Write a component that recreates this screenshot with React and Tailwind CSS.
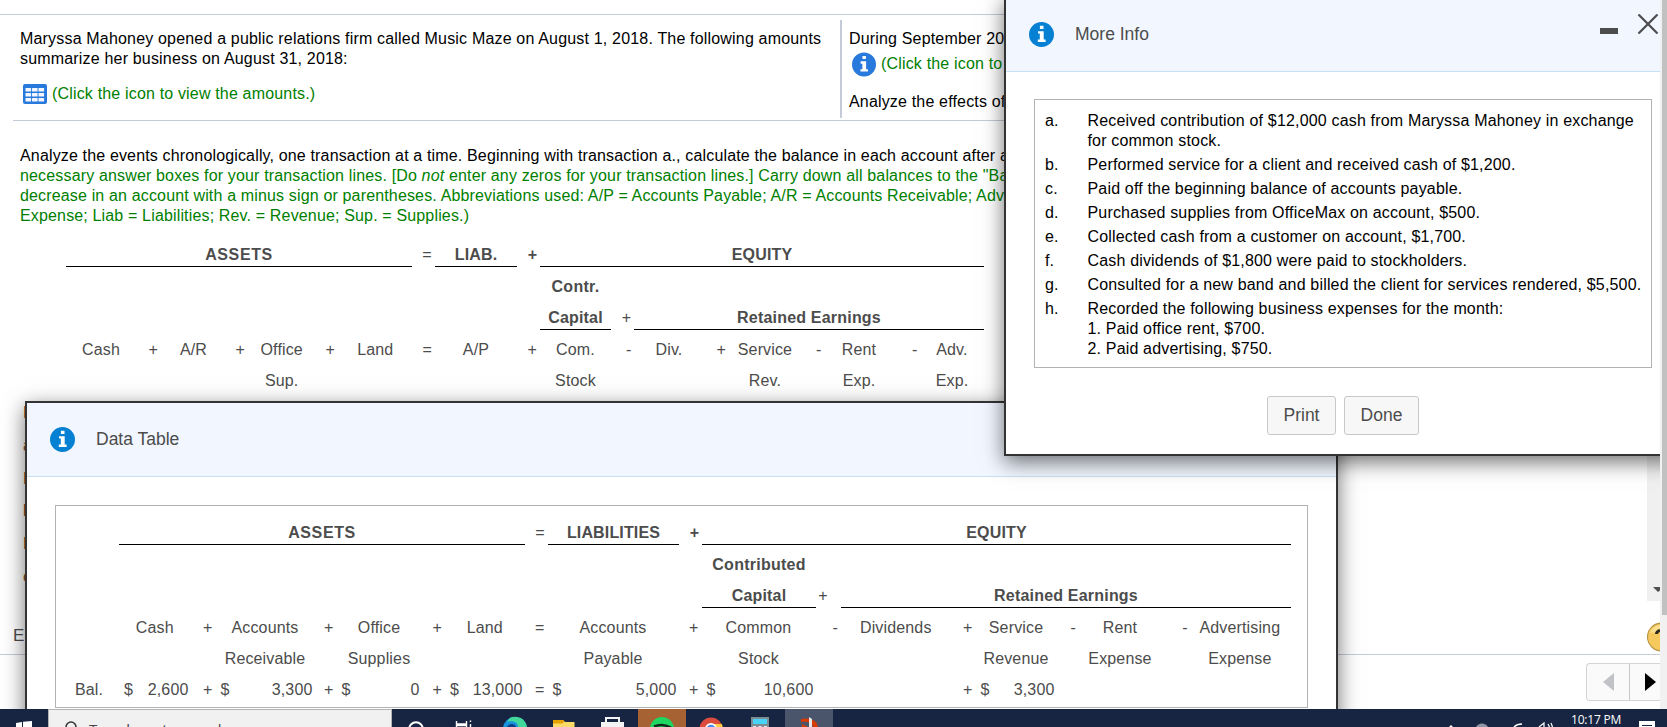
import React from 'react';
import { clsx } from 'clsx';

// Column widths of the two balance tables (label, operator, label, ...)
const WORKSHEET_COLS = [70, 22, 71, 16, 73.4, 16.6, 80.6, 16.4, 88, 17, 77, 17.5, 75, 19.5, 78, 17.5, 75, 21, 69];
const DATA_COLS = [71.5, 22, 105, 16, 91, 17.5, 85.5, 17, 137, 17, 120, 19.5, 115.5, 19, 87, 16.5, 88, 23.7, 104.3];

const OPERATORS = ['+', '+', '+', '=', '+', '-', '+', '-', '-'];

const EVENTS = [
    { id: 'a.', lines: ['Received contribution of $12,000 cash from Maryssa Mahoney in exchange', 'for common stock.'] },
    { id: 'b.', lines: ['Performed service for a client and received cash of $1,200.'] },
    { id: 'c.', lines: ['Paid off the beginning balance of accounts payable.'] },
    { id: 'd.', lines: ['Purchased supplies from OfficeMax on account, $500.'] },
    { id: 'e.', lines: ['Collected cash from a customer on account, $1,700.'] },
    { id: 'f.', lines: ['Cash dividends of $1,800 were paid to stockholders.'] },
    { id: 'g.', lines: ['Consulted for a new band and billed the client for services rendered, $5,500.'] },
    { id: 'h.', lines: ['Recorded the following business expenses for the month:', '1. Paid office rent, $700.', '2. Paid advertising, $750.'] },
];

const BALANCES = ['2,600', '3,300', '0', '13,000', '5,000', '10,600', '', '3,300', '', ''];

const InfoIcon = ({ className }) => (
    <svg viewBox="0 0 25 25" className={clsx('shrink-0', className)}>
        <circle cx="12.5" cy="12.5" r="12.5" fill="currentColor" />
        <path d="M10.9 3.7h3.6v3.2h-3.6zM9 9.2h5.7v8.3h1.9v2.4H8.8v-2.4h2v-5.9H9z" fill="#fff" />
    </svg>
);

const TableIcon = () => (
    <svg viewBox="0 0 24 20" className="w-6 h-5 shrink-0">
        <rect width="24" height="20" rx="2" fill="#2879dc" />
        {[4, 9, 14].map((y) =>
            [2.5, 9, 15.5].map((x) => <rect key={`${x}-${y}`} x={x} y={y} width="5.6" height="3.6" rx="0.6" fill="#f4f8fe" />)
        )}
    </svg>
);

/* Row of column labels, operators are only drawn on the first one */
const LabelRow = ({ cols, labels, operators = true, className }) => (
    <div className={clsx('flex h-[31px] leading-[31px] whitespace-nowrap', className)}>
        {cols.map((width, i) => (
            <div
                key={i}
                style={{ width }}
                className={clsx('shrink-0 flex', i % 2 ? 'justify-end' : 'justify-center')}
            >
                {i % 2 ? operators && OPERATORS[(i - 1) / 2] : labels[i / 2]}
            </div>
        ))}
    </div>
);

const Worksheet = () => (
    <div className="pl-[66px] mt-[12px] tracking-[0.15px] text-[#4c4c4c] font-normal">
        <div className="flex h-[29px] leading-[34px] text-center font-bold">
            <div className="w-[346px] border-b border-black tracking-[0.6px]">ASSETS</div>
            <div className="w-[23px] pl-[7px] font-normal">=</div>
            <div className="w-[82px] border-b border-black">LIAB.</div>
            <div className="w-[23px] pl-[8px]">+</div>
            <div className="w-[444px] border-b border-black tracking-[0.15px]">EQUITY</div>
        </div>
        <div className="h-[32px] leading-[40px] ml-[474px] w-[71px] text-center font-bold tracking-[0.3px]">Contr.</div>
        <div className="flex h-[31px] leading-[38px] ml-[474px] text-center font-bold tracking-[0.2px]">
            <div className="w-[71px] border-b border-black">Capital</div>
            <div className="w-[23px] pl-[8px] font-normal">+</div>
            <div className="w-[350px] border-b border-black">Retained Earnings</div>
        </div>
        <LabelRow
            cols={WORKSHEET_COLS}
            className="mt-[4px]"
            labels={['Cash', 'A/R', 'Office', 'Land', 'A/P', 'Com.', 'Div.', 'Service', 'Rent', 'Adv.']}
        />
        <LabelRow
            cols={WORKSHEET_COLS}
            operators={false}
            labels={['', '', 'Sup.', '', '', 'Stock', '', 'Rev.', 'Exp.', 'Exp.']}
        />
    </div>
);

const DataTable = () => (
    <div className="w-[1253px] h-[203px] ml-[28px] mt-[28px] border border-[#b3b3b3] tracking-[0.15px] text-[#4c4c4c]">
        <div className="flex h-[39px] pt-[10px] ml-[63px] leading-[34px] text-center font-bold">
            <div className="w-[406px] border-b border-black tracking-[0.6px]">ASSETS</div>
            <div className="w-[23px] pl-[7px] font-normal">=</div>
            <div className="w-[131px] border-b border-black tracking-[0.15px]">LIABILITIES</div>
            <div className="w-[23px] pl-[8px]">+</div>
            <div className="w-[589px] border-b border-black tracking-[0.15px]">EQUITY</div>
        </div>
        <div className="h-[32px] leading-[40px] ml-[646px] w-[114px] text-center font-bold tracking-[0.25px]">Contributed</div>
        <div className="flex h-[31px] leading-[38px] ml-[646px] text-center font-bold tracking-[0.2px]">
            <div className="w-[114px] border-b border-black">Capital</div>
            <div className="w-[25px] pr-[11px] font-normal">+</div>
            <div className="w-[450px] border-b border-black">Retained Earnings</div>
        </div>
        <LabelRow
            cols={DATA_COLS}
            className="mt-[4px] ml-[63px]"
            labels={['Cash', 'Accounts', 'Office', 'Land', 'Accounts', 'Common', 'Dividends', 'Service', 'Rent', 'Advertising']}
        />
        <LabelRow
            cols={DATA_COLS}
            operators={false}
            className="ml-[63px]"
            labels={['', 'Receivable', 'Supplies', '', 'Payable', 'Stock', '', 'Revenue', 'Expense', 'Expense']}
        />
        <div className="flex h-[31px] leading-[31px]">
            <div className="w-[63px] pl-[19px]">Bal.</div>
            {DATA_COLS.map((width, i) => {
                const value = BALANCES[i / 2];
                if (i % 2) {
                    const shown = BALANCES[(i + 1) / 2];
                    return <div key={i} style={{ width }} className="shrink-0 text-right">{shown && OPERATORS[(i - 1) / 2]}</div>;
                }
                return (
                    <div
                        key={i}
                        style={{ width }}
                        className={clsx('shrink-0 flex justify-between', i === 0 ? 'pl-[5px] pr-[2px]' : 'pl-[8px] pr-[5px]')}
                    >
                        {value && <span>$</span>}
                        <span>{value}</span>
                    </div>
                );
            })}
        </div>
    </div>
);

const DialogHeader = ({ title, children }) => (
    <div className="flex items-center h-[74px] bg-[#f1f6ff] border-b border-[#c5e2f5] pl-[23px] text-[#4c4c4c]">
        <InfoIcon className="w-[25px] h-[25px] text-[#0580d2]" />
        <h2 className="w-[90px] ml-[21px] mb-[2px] text-[17.5px] leading-5 whitespace-nowrap">{title}</h2>
        {children}
    </div>
);

const DataTableDialog = () => (
    <div className="absolute left-[25px] top-[401px] w-[1313px] h-[420px] bg-white border-2 border-[#333] shadow-[0_6px_20px_rgba(0,0,0,0.56)]">
        <DialogHeader title="Data Table" />
        <DataTable />
    </div>
);

const MoreInfoDialog = () => (
    <div className="absolute left-[1004px] -top-[4px] w-[720px] h-[460px] bg-white border-2 border-[#333] shadow-[0_6px_20px_rgba(0,0,0,0.56)]">
        <DialogHeader title="More Info">
            <div className="ml-[435px] mt-[-21px] flex items-start">
                <div className="w-[18px] h-[6px] mt-[14px] bg-[#4c4c4c]" />
                <svg viewBox="0 0 22 20" className="w-[22px] h-5 ml-[19px]" fill="none" stroke="#4c4c4c" strokeWidth="2.2">
                    <path d="M1.5 0.5L20.5 19.5M20.5 0.5L1.5 19.5" />
                </svg>
            </div>
        </DialogHeader>
        <div className="w-[618px] h-[269px] ml-[28px] mt-[27px] pt-[11px] pl-[10px] border border-[#b3b3b3] text-black">
            {EVENTS.map((event) => (
                <div key={event.id} className="flex leading-5 mb-1 whitespace-nowrap tracking-[0.17px]">
                    <div className="w-[42.5px]">{event.id}</div>
                    <div>
                        {event.lines.map((line) => <p key={line}>{line}</p>)}
                    </div>
                </div>
            ))}
        </div>
        <div className="flex gap-2 mt-[28px] ml-[261px] text-[17.5px] text-[#4c4c4c]">
            <button className="w-[69px] h-[39px] rounded-[3px] border border-[#c8c8c8] bg-[#f7f7f7]">Print</button>
            <button className="w-[75px] h-[39px] rounded-[3px] border border-[#c8c8c8] bg-[#f7f7f7]">Done</button>
        </div>
    </div>
);

const Problem = () => (
    <>
        <div className="h-[15px] border-b border-[#c5cad9]" />
        <div className="flex ml-[13px] h-[106px] border-b border-[#c5cad9] whitespace-nowrap leading-5">
            <div className="w-[827px] pl-[7px] pt-[14px]">
                <p className="tracking-[0.18px]">Maryssa Mahoney opened a public relations firm called Music Maze on August 1, 2018. The following amounts</p>
                <p className="tracking-[0.18px]">summarize her business on August 31, 2018:</p>
                <div className="flex items-center gap-[5px] mt-[15px] pl-[3px] text-[#008000] tracking-[0.17px]">
                    <TableIcon />
                    <span>(Click the icon to view the amounts.)</span>
                </div>
            </div>
            <div className="w-[2px] h-[98px] mt-[5px] bg-[#c5cad9]" />
            <div className="pl-[7px] pt-[14px] tracking-[0.17px]">
                <p>During September 2018</p>
                <div className="flex items-center gap-[5px] h-[25px] mt-[3px] pl-[3px] text-[#008000]">
                    <InfoIcon className="w-[24px] h-[25px] text-[#2879dc]" />
                    <span className="-mt-[1px]">(Click the icon to</span>
                </div>
                <p className="mt-[15px]">Analyze the effects of</p>
            </div>
        </div>
        <div className="pl-5 pt-[25px] leading-5 whitespace-nowrap tracking-[0.155px] text-[#008000]">
            <p className="text-black">Analyze the events chronologically, one transaction at a time. Beginning with transaction a., calculate the balance in each account after a</p>
            <p>necessary answer boxes for your transaction lines. [Do <i>not</i> enter any zeros for your transaction lines.] Carry down all balances to the "Ba</p>
            <p>decrease in an account with a minus sign or parentheses. Abbreviations used: A/P = Accounts Payable; A/R = Accounts Receivable; Adv</p>
            <p>Expense; Liab = Liabilities; Rev. = Revenue; Sup. = Supplies.)</p>
        </div>
        <Worksheet />
    </>
);

/* Page navigation at the bottom right, cut off by the window scrollbar */
const Navigation = () => (
    <div className="flex justify-end h-[55px] pt-[8px]">
        <div className="flex w-[74px] h-[38px] border border-r-0 border-[#d4d4d4] rounded-l bg-[#fafafa] items-center">
            <svg viewBox="0 0 11 18" className="w-[11px] h-[18px] ml-[16px]"><path d="M11 0v18L0 9z" fill="#c0c2c6" /></svg>
            <div className="w-px h-full ml-[15px] bg-[#c8c8c8]" />
            <svg viewBox="0 0 11 18" className="w-[11px] h-[18px] ml-[15px]"><path d="M0 0v18L11 9z" fill="#000" /></svg>
        </div>
    </div>
);

const HelpBadge = () => (
    <svg viewBox="0 0 13 30" className="block w-[13px] h-[30px]">
        <circle cx="14.5" cy="15" r="14" fill="#f6c95c" stroke="#b89548" strokeWidth="1.2" />
        <path d="M3 11a12 12 0 0 1 10-8v7z" fill="#fae08c" />
        <path d="M9.5 12c0-2 1.5-3 3.5-3.6" stroke="#2c2a22" strokeWidth="3" fill="none" />
    </svg>
);

const Taskbar = () => (
    <div className="flex h-[18px] bg-[#182542] overflow-hidden">
        <div className="w-[48px] shrink-0 pl-[16px] pt-[12px]">
            <svg viewBox="0 0 16 6" className="w-4 h-[6px]" fill="#fff"><path d="M0 2l6-1v5H0zM7 .8L16 0v6H7z" /></svg>
        </div>
        <div className="flex w-[344px] shrink-0 border border-b-0 border-[#b3b3b3] bg-[#f1f1f1] text-[#444]">
            <svg viewBox="0 0 12 12" className="w-3 h-3 ml-[16px] mt-[11px] shrink-0"><circle cx="6" cy="6" r="5" fill="none" stroke="#333" strokeWidth="1.5" /></svg>
            <span className="ml-[12px] mt-[9px] h-[20px] leading-5 text-[15px] whitespace-nowrap font-['Open_Sans',sans-serif]">Type here to search</span>
        </div>
        <svg viewBox="392 709 458 18" className="w-[458px] h-[18px] shrink-0">
            <rect x="638" y="709" width="48" height="18" fill="#a66232" />
            <rect x="785" y="709" width="48" height="18" fill="#4a546b" />
            <circle cx="416" cy="729" r="6.8" fill="none" stroke="#fff" strokeWidth="2" />
            <path d="M456.5 721v3h10v-3M456.5 727v-1.5h10v1.5M470.5 720.5v1.500M470.5 724v3" stroke="#fff" strokeWidth="1.4" fill="none" />
            <circle cx="515" cy="729" r="12" fill="#1593dc" />
            <path d="M510 717.8a12 12 0 0 1 17 9.200h-9c0-5-5-7-11-5z" fill="#43d89b" />
            <path d="M507 727c2-4 8-4 9 0z" fill="#0b3f85" />
            <path d="M553 720h10l2 2h9.500v5H553z" fill="#fbd965" />
            <path d="M553 720h10l1.500 1.500-2 2H553z" fill="#e4a100" />
            <path d="M606 723v-5h13v5" stroke="#f3f3f3" strokeWidth="2" fill="none" />
            <rect x="601" y="722" width="23" height="5" fill="#f3f3f3" />
            <circle cx="662" cy="729" r="12" fill="#1ed760" />
            <path d="M654 726.500c6-2.500 12-1.500 17 1" stroke="#10271a" strokeWidth="2.500" fill="none" />
            <circle cx="711" cy="729" r="11.500" fill="#dd4b3e" />
            <path d="M710 724h11.500c1 1 1 2 1 3H710z" fill="#ffcd40" />
            <circle cx="711" cy="729" r="6" fill="#fff" />
            <circle cx="711" cy="729.500" r="4.700" fill="#4a8af4" />
            <rect x="751" y="717" width="18" height="10" fill="#7d8a92" />
            <rect x="753" y="719" width="14" height="5" fill="#46d3f5" />
            <path d="M753 726.500h3M758.500 726.500h3M764 726.500h3" stroke="#e6eaec" />
            <path d="M801 719c11-2 16 2 17 8h-5c-1-4-5-6-12-5zM802 724l6 3h-6z" fill="#d83b01" />
            <path d="M809 717l3 2v8h-3z" fill="#e8e8e8" />
        </svg>
        <div className="ml-auto flex shrink-0 text-white">
            <svg viewBox="1448 709 112 18" className="w-[112px] h-[18px]">
                <path d="M1449 727l2-2 2 2z" fill="#fff" />
                <path d="M1476 727a7 7 0 0 1 12 0z" fill="#8f96a5" />
                <path d="M1514 727c2-2 4-3 8-3" stroke="#fff" strokeWidth="1.400" fill="none" />
                <path d="M1539 727l5-4v4M1548 724l1.500 3M1551 723l1.500 4" stroke="#fff" strokeWidth="1.200" fill="none" />
            </svg>
            <span className="w-[79px] pl-[11px] text-[12px] leading-[21px] tracking-[-0.2px] whitespace-nowrap font-['Open_Sans',sans-serif]">10:17 PM</span>
            <div className="w-4 h-[10px] mt-[12px] mr-[12px] bg-white pt-[4px] px-[3px]">
                <div className="h-px bg-[#182542]" />
            </div>
        </div>
    </div>
);

const App = () => (
    <div className="w-[1667px] h-[727px] overflow-hidden bg-white text-[16px] text-black font-['Liberation_Sans',Arial,sans-serif]">
        <div className="flex h-[709px]">
            <div className="relative w-[1660px] h-[709px] overflow-hidden">
                <div className="flex h-[655px] border-b border-[#c5cad9]">
                    <div className="w-[1647px] shrink-0">
                        <Problem />
                        {/* Row names of the answer grid, mostly under the dialog */}
                        <div className="pl-[23px] mt-px h-[219px] text-[#8a4d28] leading-[32.8px]">
                            {['B', 'a', 'B', 'b', 'B', 'c'].map((name, i) => <div key={i}>{name}</div>)}
                        </div>
                        <div className="pl-[13px] mt-[10px] text-[17px] leading-5 text-[#4c4c4c]">E</div>
                    </div>
                    <div className="w-[13px]">
                        <div className="h-[601px] bg-[#f0f0f0] pt-[587px] pl-[6px]">
                            <svg viewBox="0 0 7 5" className="w-[7px] h-[5px] block"><path d="M0 0h7v3.500L5 5z" fill="#505050" /></svg>
                        </div>
                        <div className="pt-[21px]"><HelpBadge /></div>
                    </div>
                </div>
                <Navigation />
                <DataTableDialog />
                <MoreInfoDialog />
            </div>
            <div className="w-[7px] bg-[#f1f1f1] pl-[2px]">
                <div className="h-[615px] bg-[#c1c1c1]" />
            </div>
        </div>
        <Taskbar />
    </div>
);

export default App;
